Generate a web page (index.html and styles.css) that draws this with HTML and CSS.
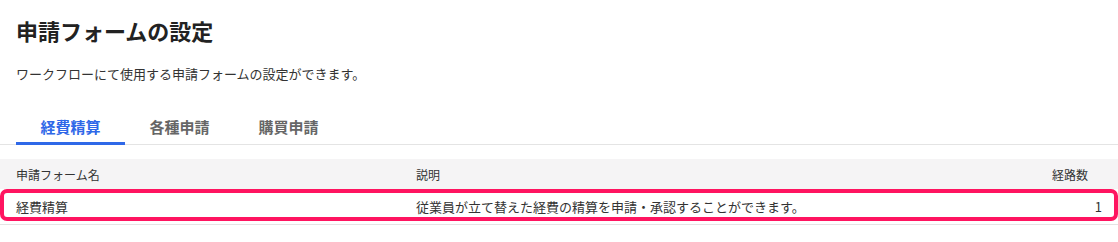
FILE: index.html
```html
<!DOCTYPE html>
<html lang="ja">
<head>
<meta charset="utf-8">
<link rel="stylesheet" href="styles.css">
</head>
<body>
<div class="page">
  <header class="intro">
    <h1 class="title">申請フォームの設定</h1>
    <p class="lead">ワークフローにて使用する申請フォームの設定ができます。</p>
  </header>
  <nav class="tabs">
    <div class="tab active">経費精算</div>
    <div class="tab">各種申請</div>
    <div class="tab">購買申請</div>
  </nav>
  <div class="table">
    <div class="row head">
      <div class="cell">申請フォーム名</div>
      <div class="cell">説明</div>
      <div class="cell num">経路数</div>
    </div>
    <div class="row body">
      <div class="cell">経費精算</div>
      <div class="cell">従業員が立て替えた経費の精算を申請・承認することができます。</div>
      <div class="cell num">1</div>
      <div class="highlight"></div>
    </div>
  </div>
</div>
</body>
</html>
```
FILE: styles.css
```css
* { box-sizing: border-box; }
html, body { margin: 0; padding: 0; background: #fff; }
body {
  font-family: "Noto Sans CJK JP", "Noto Sans", "Liberation Sans", sans-serif;
  color: #333;
}
.intro { padding: 16px 16px 0; }
.title {
  margin: 0;
  font-size: 22px;
  line-height: 28px;
  font-weight: 700;
  color: #222;
}
.lead {
  margin: 20px 0 0;
  font-size: 13px;
  line-height: 20px;
  color: #333;
}
.tabs {
  display: flex;
  margin-top: 26px;
  padding: 0 16px;
  border-bottom: 1px solid #e4e4e4;
}
.tab {
  width: 109px;
  text-align: center;
  font-size: 15px;
  line-height: 21px;
  font-weight: 700;
  color: #666;
  padding: 6px 0 5px;
  border-bottom: 3px solid transparent;
  margin-bottom: -1px;
}
.tab.active {
  color: #2f68e8;
  border-bottom-color: #2f68e8;
}
.table { margin-top: 14px; }
.row {
  display: grid;
  grid-template-columns: 400px 1fr 160px;
  align-items: center;
  position: relative;
}
.row.head {
  height: 30px;
  background: #f5f4f5;
  font-size: 12px;
  color: #333;
}
.row.body {
  height: 36px;
  font-size: 13px;
  color: #333;
  border-bottom: 1px solid #e4e4e4;
}
.cell { padding-left: 16px; white-space: nowrap; }
.num { text-align: right; padding-right: 16px; }
.row.head .num { padding-right: 30px; }
.highlight {
  position: absolute;
  left: 0;
  right: 0;
  top: 0;
  bottom: 3px;
  border: 4px solid #ff1460;
  border-radius: 7px;
  pointer-events: none;
}
```
